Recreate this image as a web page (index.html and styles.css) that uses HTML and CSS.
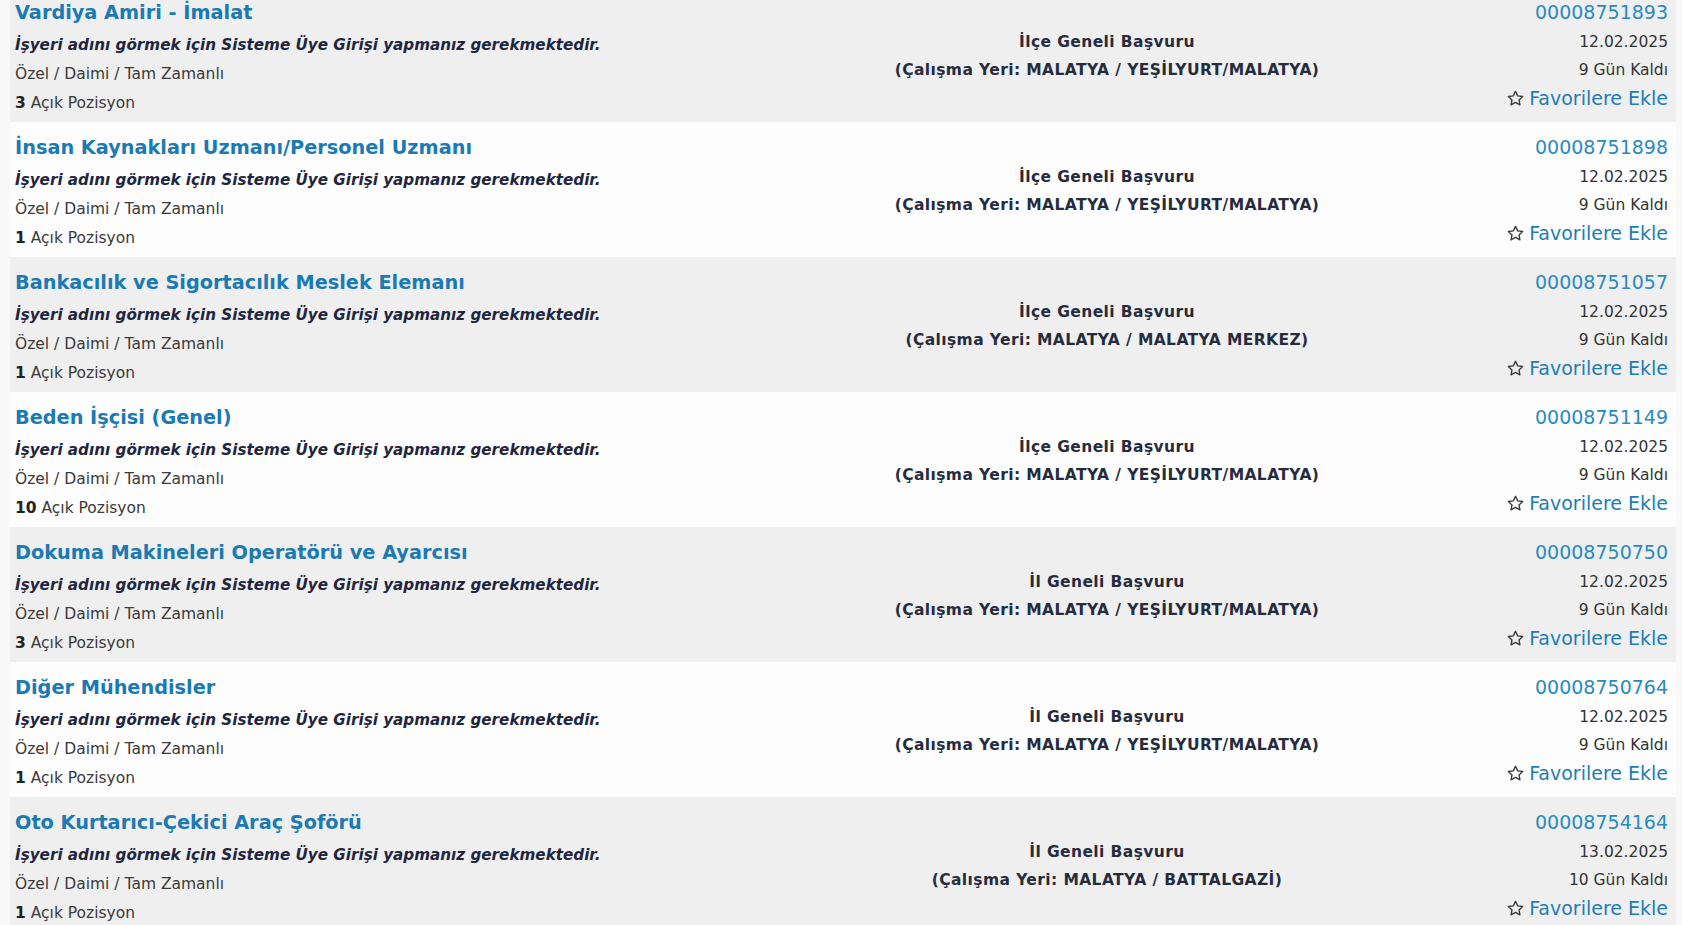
FILE: index.html
```html
<!DOCTYPE html>
<html lang="tr">
<head>
<meta charset="utf-8">
<title>İş İlanları</title>
<link rel="stylesheet" href="styles.css">
</head>
<body>
<div class="list">
  <div class="job alt">
    <div class="left">
      <a class="title">Vardiya Amiri - İmalat</a>
      <div class="employer">İşyeri adını görmek için Sisteme Üye Girişi yapmanız gerekmektedir.</div>
      <div class="type">Özel / Daimi / Tam Zamanlı</div>
      <div class="count"><b>3</b> Açık Pozisyon</div>
    </div>
    <div class="mid">
      <div>İlçe Geneli Başvuru</div>
      <div>(Çalışma Yeri: MALATYA / YEŞİLYURT/MALATYA)</div>
    </div>
    <div class="right">
      <a class="num">00008751893</a>
      <div class="date">12.02.2025</div>
      <div class="left-days">9 Gün Kaldı</div>
      <a class="fav"><svg class="star" viewBox="0 0 16 16"><path d="M8 1.2l2.05 4.3 4.7.6-3.45 3.25.88 4.65L8 11.7l-4.18 2.3.88-4.65L1.25 6.1l4.7-.6z"/></svg>Favorilere Ekle</a>
    </div>
  </div>
  <div class="job">
    <div class="left">
      <a class="title">İnsan Kaynakları Uzmanı/Personel Uzmanı</a>
      <div class="employer">İşyeri adını görmek için Sisteme Üye Girişi yapmanız gerekmektedir.</div>
      <div class="type">Özel / Daimi / Tam Zamanlı</div>
      <div class="count"><b>1</b> Açık Pozisyon</div>
    </div>
    <div class="mid">
      <div>İlçe Geneli Başvuru</div>
      <div>(Çalışma Yeri: MALATYA / YEŞİLYURT/MALATYA)</div>
    </div>
    <div class="right">
      <a class="num">00008751898</a>
      <div class="date">12.02.2025</div>
      <div class="left-days">9 Gün Kaldı</div>
      <a class="fav"><svg class="star" viewBox="0 0 16 16"><path d="M8 1.2l2.05 4.3 4.7.6-3.45 3.25.88 4.65L8 11.7l-4.18 2.3.88-4.65L1.25 6.1l4.7-.6z"/></svg>Favorilere Ekle</a>
    </div>
  </div>
  <div class="job alt">
    <div class="left">
      <a class="title">Bankacılık ve Sigortacılık Meslek Elemanı</a>
      <div class="employer">İşyeri adını görmek için Sisteme Üye Girişi yapmanız gerekmektedir.</div>
      <div class="type">Özel / Daimi / Tam Zamanlı</div>
      <div class="count"><b>1</b> Açık Pozisyon</div>
    </div>
    <div class="mid">
      <div>İlçe Geneli Başvuru</div>
      <div>(Çalışma Yeri: MALATYA / MALATYA MERKEZ)</div>
    </div>
    <div class="right">
      <a class="num">00008751057</a>
      <div class="date">12.02.2025</div>
      <div class="left-days">9 Gün Kaldı</div>
      <a class="fav"><svg class="star" viewBox="0 0 16 16"><path d="M8 1.2l2.05 4.3 4.7.6-3.45 3.25.88 4.65L8 11.7l-4.18 2.3.88-4.65L1.25 6.1l4.7-.6z"/></svg>Favorilere Ekle</a>
    </div>
  </div>
  <div class="job">
    <div class="left">
      <a class="title">Beden İşçisi (Genel)</a>
      <div class="employer">İşyeri adını görmek için Sisteme Üye Girişi yapmanız gerekmektedir.</div>
      <div class="type">Özel / Daimi / Tam Zamanlı</div>
      <div class="count"><b>10</b> Açık Pozisyon</div>
    </div>
    <div class="mid">
      <div>İlçe Geneli Başvuru</div>
      <div>(Çalışma Yeri: MALATYA / YEŞİLYURT/MALATYA)</div>
    </div>
    <div class="right">
      <a class="num">00008751149</a>
      <div class="date">12.02.2025</div>
      <div class="left-days">9 Gün Kaldı</div>
      <a class="fav"><svg class="star" viewBox="0 0 16 16"><path d="M8 1.2l2.05 4.3 4.7.6-3.45 3.25.88 4.65L8 11.7l-4.18 2.3.88-4.65L1.25 6.1l4.7-.6z"/></svg>Favorilere Ekle</a>
    </div>
  </div>
  <div class="job alt">
    <div class="left">
      <a class="title">Dokuma Makineleri Operatörü ve Ayarcısı</a>
      <div class="employer">İşyeri adını görmek için Sisteme Üye Girişi yapmanız gerekmektedir.</div>
      <div class="type">Özel / Daimi / Tam Zamanlı</div>
      <div class="count"><b>3</b> Açık Pozisyon</div>
    </div>
    <div class="mid">
      <div>İl Geneli Başvuru</div>
      <div>(Çalışma Yeri: MALATYA / YEŞİLYURT/MALATYA)</div>
    </div>
    <div class="right">
      <a class="num">00008750750</a>
      <div class="date">12.02.2025</div>
      <div class="left-days">9 Gün Kaldı</div>
      <a class="fav"><svg class="star" viewBox="0 0 16 16"><path d="M8 1.2l2.05 4.3 4.7.6-3.45 3.25.88 4.65L8 11.7l-4.18 2.3.88-4.65L1.25 6.1l4.7-.6z"/></svg>Favorilere Ekle</a>
    </div>
  </div>
  <div class="job">
    <div class="left">
      <a class="title">Diğer Mühendisler</a>
      <div class="employer">İşyeri adını görmek için Sisteme Üye Girişi yapmanız gerekmektedir.</div>
      <div class="type">Özel / Daimi / Tam Zamanlı</div>
      <div class="count"><b>1</b> Açık Pozisyon</div>
    </div>
    <div class="mid">
      <div>İl Geneli Başvuru</div>
      <div>(Çalışma Yeri: MALATYA / YEŞİLYURT/MALATYA)</div>
    </div>
    <div class="right">
      <a class="num">00008750764</a>
      <div class="date">12.02.2025</div>
      <div class="left-days">9 Gün Kaldı</div>
      <a class="fav"><svg class="star" viewBox="0 0 16 16"><path d="M8 1.2l2.05 4.3 4.7.6-3.45 3.25.88 4.65L8 11.7l-4.18 2.3.88-4.65L1.25 6.1l4.7-.6z"/></svg>Favorilere Ekle</a>
    </div>
  </div>
  <div class="job alt">
    <div class="left">
      <a class="title">Oto Kurtarıcı-Çekici Araç Şoförü</a>
      <div class="employer">İşyeri adını görmek için Sisteme Üye Girişi yapmanız gerekmektedir.</div>
      <div class="type">Özel / Daimi / Tam Zamanlı</div>
      <div class="count"><b>1</b> Açık Pozisyon</div>
    </div>
    <div class="mid">
      <div>İl Geneli Başvuru</div>
      <div>(Çalışma Yeri: MALATYA / BATTALGAZİ)</div>
    </div>
    <div class="right">
      <a class="num">00008754164</a>
      <div class="date">13.02.2025</div>
      <div class="left-days">10 Gün Kaldı</div>
      <a class="fav"><svg class="star" viewBox="0 0 16 16"><path d="M8 1.2l2.05 4.3 4.7.6-3.45 3.25.88 4.65L8 11.7l-4.18 2.3.88-4.65L1.25 6.1l4.7-.6z"/></svg>Favorilere Ekle</a>
    </div>
  </div>
</div>
</body>
</html>
```
FILE: styles.css
```css
html, body {
  margin: 0;
  padding: 0;
}
body {
  background: #f9f9f9;
  font-family: "DejaVu Sans", Verdana, sans-serif;
  color: #333;
  overflow: hidden;
  height: 925px;
}
.list {
  margin: -13px 6px 0 10px;
}
.job {
  display: grid;
  grid-template-columns: 846px 492px 1fr;
  height: 135px;
  box-sizing: border-box;
  padding: 8px 8px 0 5px;
  background: #fdfdfd;
}
.job.alt {
  background: #efefef;
}
.left, .right {
  display: flex;
  flex-direction: column;
}
.left {
  padding-top: 1px;
}
.right {
  align-items: flex-end;
}
.title {
  font-weight: bold;
  font-size: 19.3px;
  line-height: 34px;
  color: #1b7ab3;
  white-space: nowrap;
}
.employer {
  font-weight: bold;
  font-style: italic;
  font-size: 15.2px;
  line-height: 31px;
  color: #1f2640;
  white-space: nowrap;
}
.type {
  font-size: 15.5px;
  line-height: 26px;
  color: #3a3a3a;
}
.count {
  font-size: 15.5px;
  line-height: 32px;
  color: #3a3a3a;
}
.count b {
  color: #222;
}
.mid {
  padding-top: 33px;
  text-align: center;
  font-weight: bold;
  font-size: 15.5px;
  letter-spacing: 0.4px;
  line-height: 28px;
  color: #262c3e;
}
.num {
  font-size: 19px;
  line-height: 34px;
  color: #2a8ac0;
}
.date {
  font-size: 15.5px;
  line-height: 26px;
  color: #333;
}
.left-days {
  font-size: 15.5px;
  line-height: 30px;
  color: #333;
}
.fav {
  display: flex;
  align-items: center;
  gap: 5px;
  font-size: 19px;
  line-height: 27px;
  color: #1d7db5;
}
.star {
  width: 17px;
  height: 17px;
  fill: none;
  stroke: #3a3a3a;
  stroke-width: 1.3;
  stroke-linejoin: round;
}
```
